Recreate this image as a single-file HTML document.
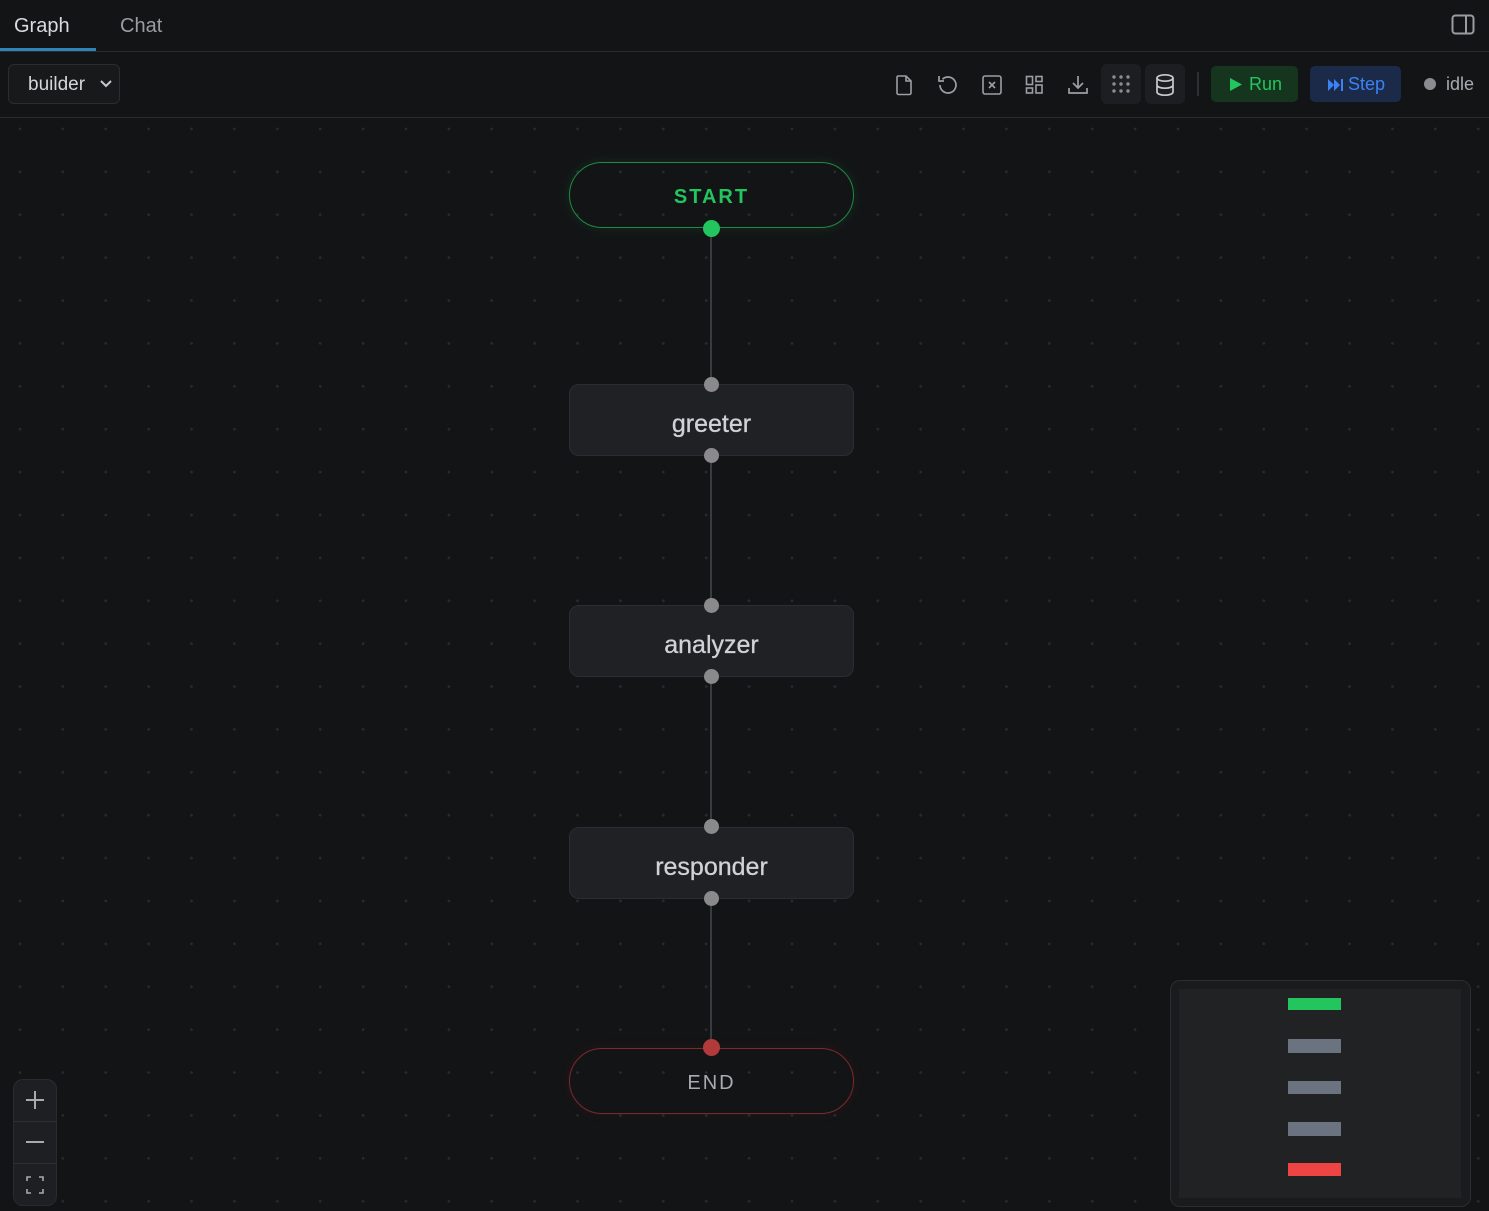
<!DOCTYPE html>
<html><head><meta charset="utf-8"><style>
*{box-sizing:border-box;margin:0;padding:0}
body{width:1489px;height:1211px;background:#131416;font-family:"Liberation Sans","DejaVu Sans",sans-serif;overflow:hidden;position:relative;color:#d4d4d8}
.topbar{position:absolute;left:0;top:0;width:1489px;height:52px;border-bottom:1px solid #2a2b2e;background:#131416}
.tab{position:absolute;top:15px;font-size:20px}
.tb{position:absolute;left:0;top:52px;width:1489px;height:66px;border-bottom:1px solid #2a2b2e;background:#131416}
.canvas{position:absolute;left:0;top:118px;width:1489px;height:1093px;background-color:#131416;background-image:radial-gradient(circle,#2a2b2f 1.2px,transparent 1.5px);background-size:42.9px 42.9px;background-position:-1.5px -10.5px}
.node{position:absolute;left:569px;width:285px;height:72px;background:#202124;border:1px solid #2c2d30;border-radius:10px;text-align:center;line-height:78px;font-size:25px;color:#cfd2d8;-webkit-text-stroke:0.3px #cfd2d8}
.pill{position:absolute;left:569px;width:285px;height:66px;border-radius:33px;text-align:center;line-height:68px;font-size:20px;letter-spacing:2px}
.h{position:absolute;width:15px;height:15px;border-radius:50%;background:#8a8a8c;left:704px}
.line{position:absolute;left:710px;width:2px;background:#3a3b3e}
.ib{position:absolute;top:64px;width:40px;height:40px;border-radius:6px}
svg{position:absolute}
</style></head><body>
<div class="topbar">
  <div class="tab" style="left:14px;color:#d8dbe0">Graph</div>
  <div style="position:absolute;left:0;top:48px;width:96px;height:3px;background:#2e86b8"></div>
  <div class="tab" style="left:120px;color:#9a9ca2">Chat</div>
  <svg style="left:1451px;top:14px" width="24" height="22" viewBox="0 0 24 22"><rect x="1.5" y="1.5" width="21" height="18" rx="3" fill="none" stroke="#9a9ca2" stroke-width="2"/><line x1="15" y1="2" x2="15" y2="19" stroke="#9a9ca2" stroke-width="2"/></svg>
</div>
<div class="tb">
  <div style="position:absolute;left:8px;top:12px;width:112px;height:40px;border:1px solid #2c2d30;border-radius:6px;background:#18191b;font-size:19px;line-height:40px;padding-left:19px;color:#d4d6da">builder</div>
  <svg style="left:99px;top:27px" width="14" height="10" viewBox="0 0 14 10"><path d="M2 2l5 5 5-5" fill="none" stroke="#c8cacf" stroke-width="2"/></svg>
</div>
<svg style="left:894px;top:74px" width="20" height="22" viewBox="0 0 20 22" fill="none" stroke="#9c9ea3" stroke-width="1.6"><path d="M4 2h8l5 5v12a1.5 1.5 0 0 1-1.5 1.5h-11A1.5 1.5 0 0 1 3 19V3.5A1.5 1.5 0 0 1 4 2z"/><path d="M12 2v5h5"/></svg>
<svg style="left:936px;top:74px" width="22" height="22" viewBox="0 0 22 22" fill="none" stroke="#9c9ea3" stroke-width="1.7"><path d="M4 11a8 8 0 1 0 2.5-5.8"/><path d="M3 2v5h5"/></svg>
<svg style="left:981px;top:74px" width="22" height="22" viewBox="0 0 22 22" fill="none" stroke="#9c9ea3" stroke-width="1.6"><rect x="2" y="2" width="18" height="18" rx="2"/><path d="M8 8l6 6M14 8l-6 6"/></svg>
<svg style="left:1025px;top:75px" width="20" height="20" viewBox="0 0 20 20" fill="none" stroke="#9c9ea3" stroke-width="1.6"><rect x="1.5" y="1.5" width="6" height="8"/><rect x="11" y="1.5" width="6" height="5"/><rect x="1.5" y="13" width="6" height="5"/><rect x="11" y="10" width="6" height="8"/></svg>
<svg style="left:1067px;top:74px" width="22" height="22" viewBox="0 0 22 22" fill="none" stroke="#9c9ea3" stroke-width="1.7"><path d="M11 2v12M6 9l5 5 5-5M2 14v5h18v-5"/></svg>
<div class="ib" style="left:1101px;background:#1d1e21"></div>
<svg style="left:1111px;top:74px" width="20" height="20" viewBox="0 0 20 20" fill="#8a8c91"><circle cx="3" cy="3" r="1.7"/><circle cx="10" cy="3" r="1.7"/><circle cx="17" cy="3" r="1.7"/><circle cx="3" cy="10" r="1.7"/><circle cx="10" cy="10" r="1.7"/><circle cx="17" cy="10" r="1.7"/><circle cx="3" cy="17" r="1.7"/><circle cx="10" cy="17" r="1.7"/><circle cx="17" cy="17" r="1.7"/></svg>
<div class="ib" style="left:1145px;background:#1d1e21"></div>
<svg style="left:1154px;top:73px" width="22" height="24" viewBox="0 0 22 24" fill="none" stroke="#c8cacf" stroke-width="1.7"><ellipse cx="11" cy="5" rx="8" ry="3.2"/><path d="M3 5v14c0 1.8 3.6 3.2 8 3.2s8-1.4 8-3.2V5M3 12c0 1.8 3.6 3.2 8 3.2s8-1.4 8-3.2"/></svg>
<div style="position:absolute;left:1197px;top:72px;width:2px;height:24px;background:#2e2f33"></div>
<div style="position:absolute;left:1211px;top:66px;width:87px;height:36px;border-radius:5px;background:#16351f;color:#22c55e;font-size:18px;line-height:37px;padding-left:38px">Run</div>
<svg style="left:1229px;top:77px" width="14" height="15" viewBox="0 0 14 15"><path d="M1 1l12 6.5L1 14z" fill="#22c55e"/></svg>
<div style="position:absolute;left:1310px;top:66px;width:91px;height:36px;border-radius:5px;background:#1b2a48;color:#3b82f6;font-size:18px;line-height:37px;padding-left:38px">Step</div>
<svg style="left:1328px;top:79px" width="16" height="12" viewBox="0 0 16 12" fill="#3b82f6"><path d="M0 0l6 6-6 6zM6 0l6 6-6 6z"/><rect x="13" y="0" width="2" height="12"/></svg>
<div style="position:absolute;left:1424px;top:78px;width:12px;height:12px;border-radius:50%;background:#8a8c91"></div>
<div style="position:absolute;left:1446px;top:74px;font-size:18px;color:#a8aab0">idle</div>

<div class="canvas"></div>
<div class="line" style="top:228px;height:156px"></div>
<div class="line" style="top:456px;height:150px"></div>
<div class="line" style="top:677px;height:150px"></div>
<div class="line" style="top:898px;height:150px"></div>

<div class="pill" style="top:162px;border:1.5px solid #1f8a44;box-shadow:0 0 14px rgba(34,197,94,0.12);color:#22c55e;font-weight:bold">START</div>
<div class="node" style="top:384px">greeter</div>
<div class="node" style="top:605px">analyzer</div>
<div class="node" style="top:827px">responder</div>
<div class="pill" style="top:1048px;border:1.5px solid #7a2a2d;box-shadow:0 0 12px rgba(239,68,68,0.08);color:#a9abb0">END</div>

<div class="h" style="top:220px;background:#22c55e;width:17px;height:17px;left:703px"></div>
<div class="h" style="top:377px"></div>
<div class="h" style="top:448px"></div>
<div class="h" style="top:598px"></div>
<div class="h" style="top:669px"></div>
<div class="h" style="top:819px"></div>
<div class="h" style="top:891px"></div>
<div class="h" style="top:1039px;background:#b33a3a;width:17px;height:17px;left:703px"></div>

<div style="position:absolute;left:13px;top:1079px;width:44px;height:127px;border-radius:10px;background:#1e1f22;border:1px solid #2a2b2e">
  <div style="position:absolute;left:0;top:41px;width:42px;height:1px;background:#2e2f33"></div>
  <div style="position:absolute;left:0;top:83px;width:42px;height:1px;background:#2e2f33"></div>
</div>
<svg style="left:25px;top:1090px" width="20" height="20" viewBox="0 0 20 20" stroke="#a8aab0" stroke-width="2"><path d="M10 1v18M1 10h18"/></svg>
<svg style="left:25px;top:1132px" width="20" height="20" viewBox="0 0 20 20" stroke="#a8aab0" stroke-width="2"><path d="M1 10h18"/></svg>
<svg style="left:25px;top:1175px" width="20" height="20" viewBox="0 0 20 20" fill="none" stroke="#a8aab0" stroke-width="1.6"><path d="M2 6V2h4M14 2h4v4M18 14v4h-4M6 18H2v-4"/></svg>

<div style="position:absolute;left:1170px;top:980px;width:301px;height:227px;border-radius:10px;background:#1a1b1d;border:1px solid #2c2d30"></div>
<div style="position:absolute;left:1179px;top:989px;width:282px;height:209px;background:#212224"></div>
<div style="position:absolute;left:1288px;top:998px;width:53px;height:12px;background:#22c55e"></div>
<div style="position:absolute;left:1288px;top:1039px;width:53px;height:14px;background:#6b7280"></div>
<div style="position:absolute;left:1288px;top:1081px;width:53px;height:13px;background:#6b7280"></div>
<div style="position:absolute;left:1288px;top:1122px;width:53px;height:14px;background:#6b7280"></div>
<div style="position:absolute;left:1288px;top:1163px;width:53px;height:13px;background:#ef4444"></div>
</body></html>
